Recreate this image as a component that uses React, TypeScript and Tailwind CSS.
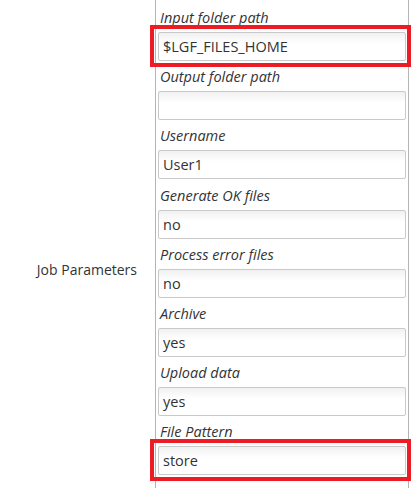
import React from "react";

const rows: { label: string; value: string; red?: boolean }[] = [
  { label: "Input folder path", value: "$LGF_FILES_HOME", red: true },
  { label: "Output folder path", value: "" },
  { label: "Username", value: "User1" },
  { label: "Generate OK files", value: "no" },
  { label: "Process error files", value: "no" },
  { label: "Archive", value: "yes" },
  { label: "Upload data", value: "yes" },
  { label: "File Pattern", value: "store", red: true },
];

export default function App() {
  return (
    <div
      className="w-[418px] h-[488px] overflow-hidden bg-white flex text-[#333333]"
      style={{ fontFamily: '"Open Sans", "Noto Sans", sans-serif' }}
    >
      <div className="w-[155px] shrink-0 flex items-center justify-end pr-[18px] pt-[50px] text-[14px]">
        Job Parameters
      </div>
      <div className="w-[254px] shrink-0 border-x border-[#b4b4b4] pl-[2px] pr-[2px] pt-[8px] h-[540px]">
        {rows.map((r) => (
          <div key={r.label} className="h-[59.2px] flex flex-col">
            <div className="h-[20px] leading-[20px] pl-[2px] italic text-[14.5px]">{r.label}</div>
            <div className="relative mt-[4px]">
              <div className="h-[29px] border border-[#c9c9c9] rounded-[2px] bg-gradient-to-b from-[#f1f1f1] to-white to-[40%] px-[4px] leading-[27px] text-[14.5px]">
                {r.value}
              </div>
              {r.red && (
                <div className="absolute left-[-8px] right-[-5px] top-[-7px] bottom-[-6px] border-[4px] border-[#ed1c24] pointer-events-none" />
              )}
            </div>
          </div>
        ))}
      </div>
    </div>
  );
}
